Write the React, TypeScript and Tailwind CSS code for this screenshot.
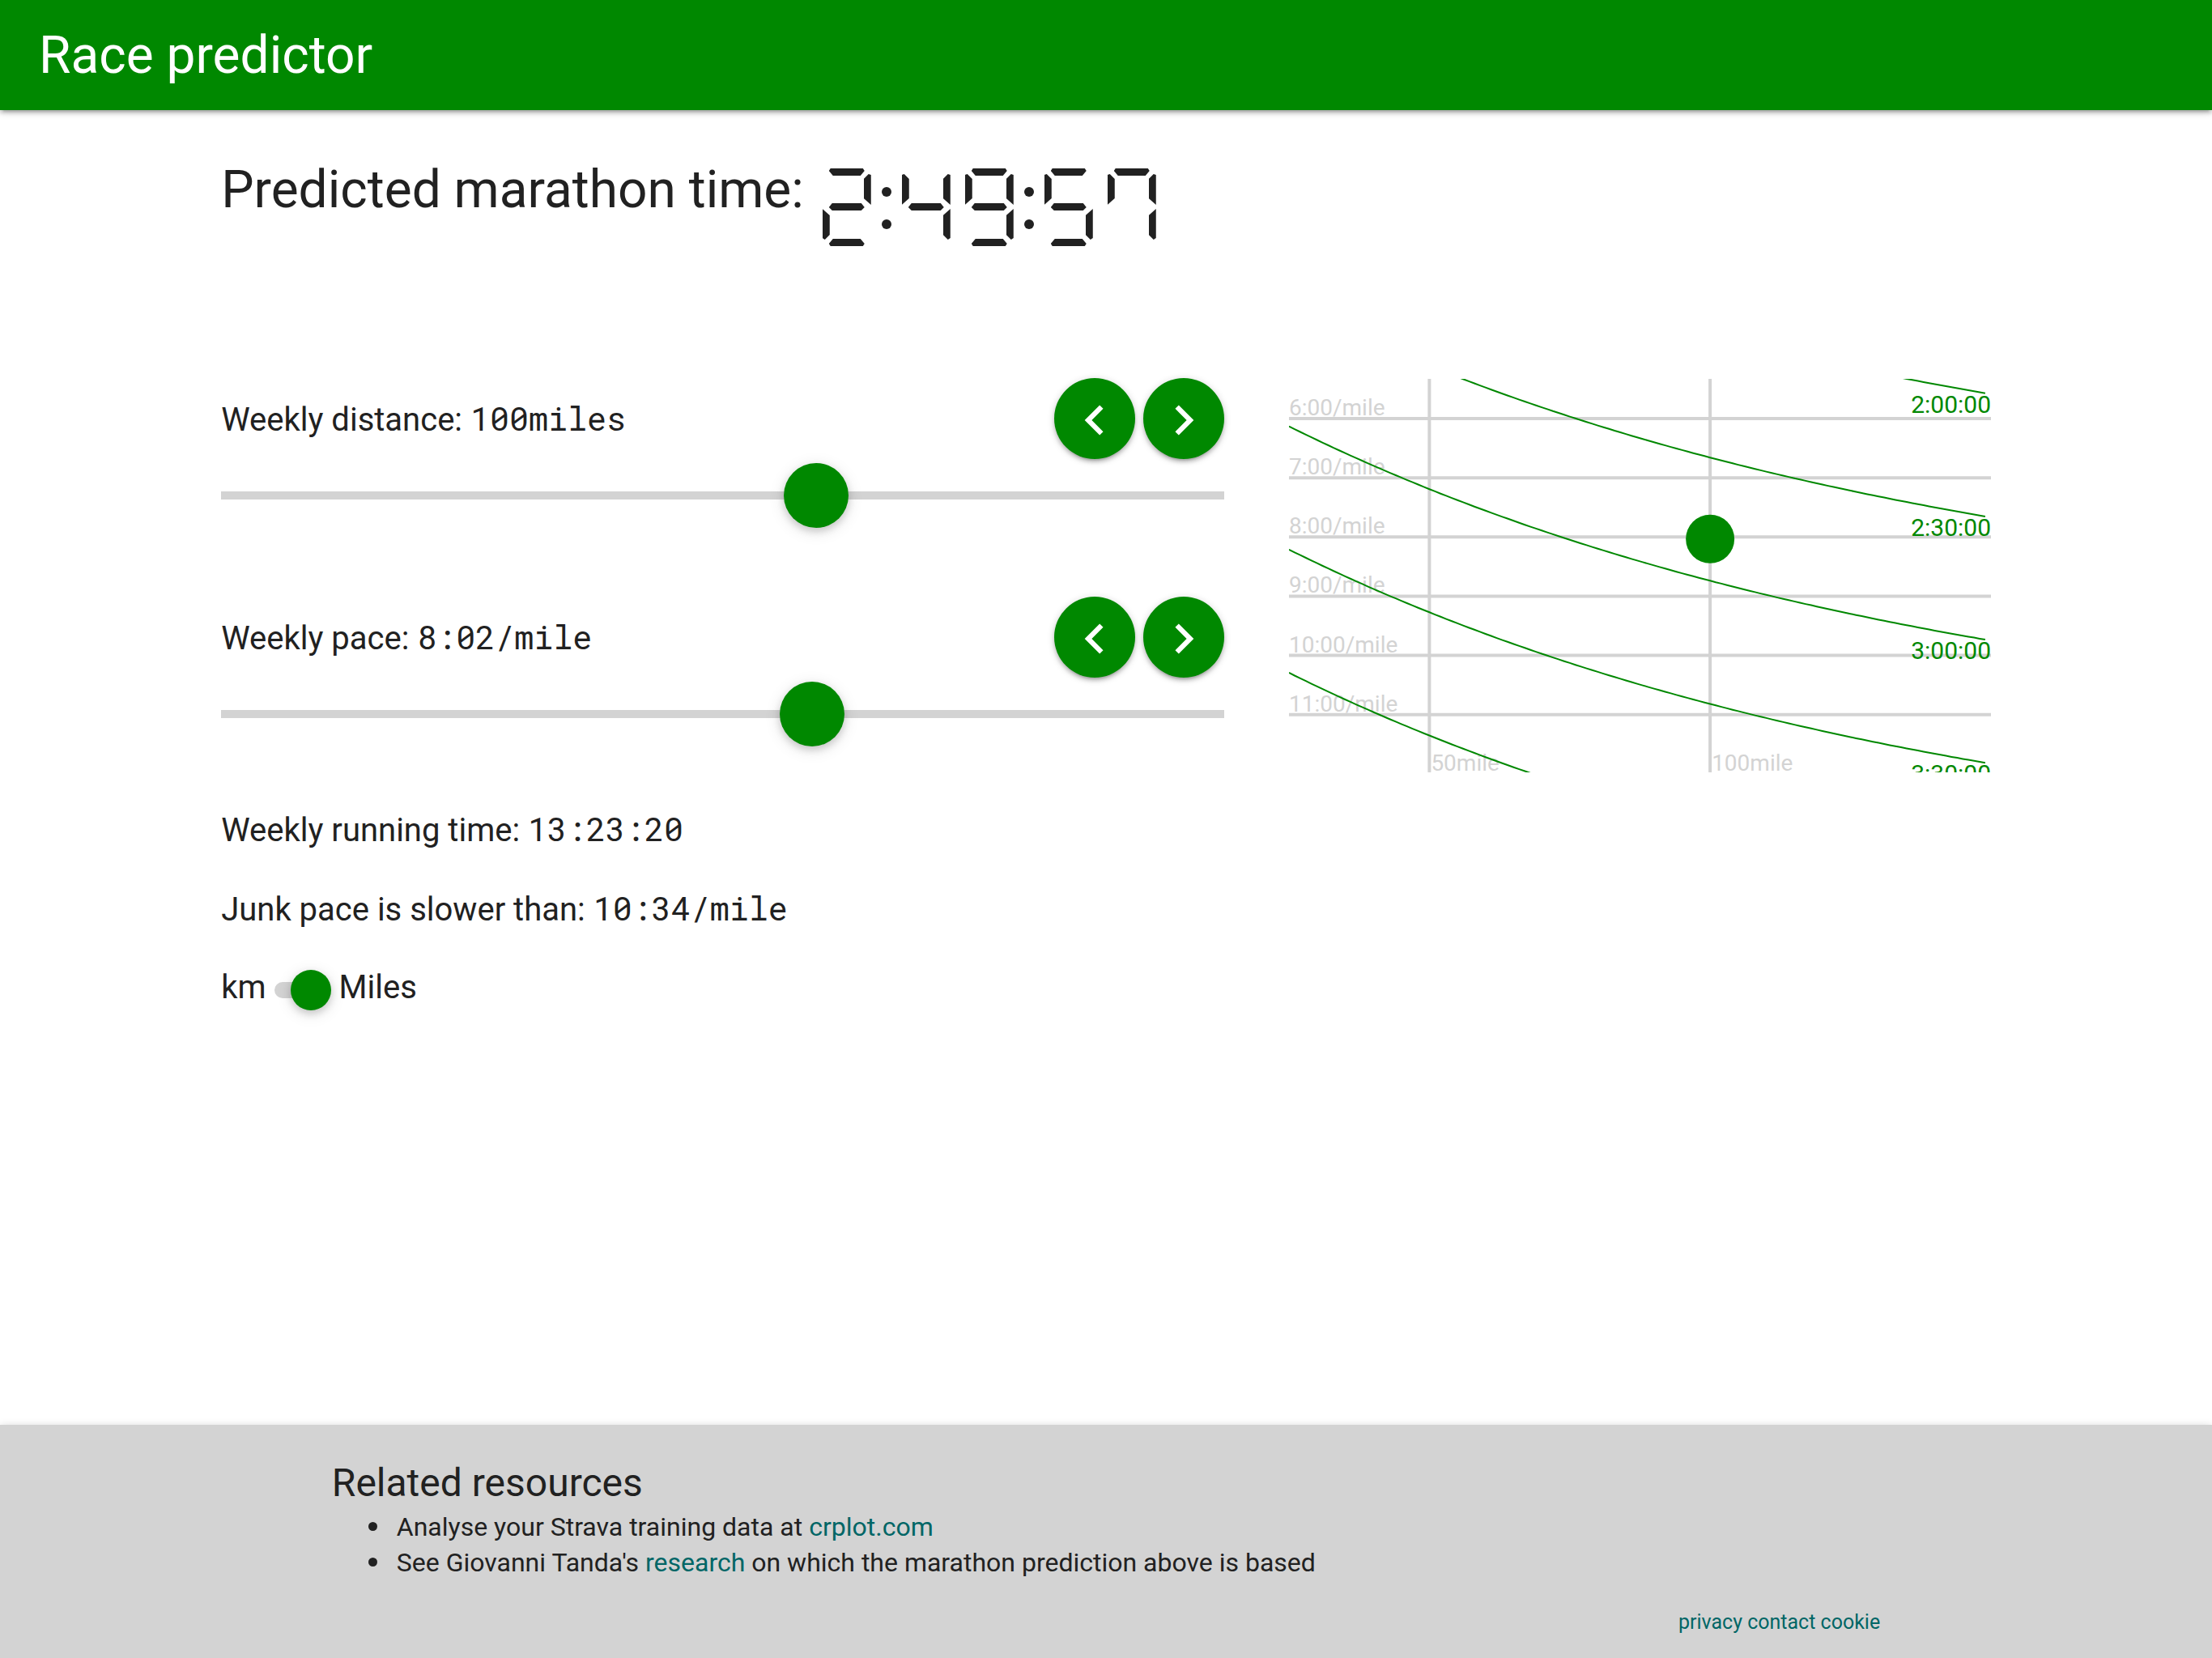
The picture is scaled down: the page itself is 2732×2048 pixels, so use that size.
import { useState } from "react";

const GREEN = "#008800";
const GRID = "#d3d3d3";

/* ---------- Seven-segment clock ---------- */

type Segment = "a" | "b" | "c" | "d" | "e" | "f" | "g";

const SEGMENTS: Record<string, string> = {
  "0": "abcdef",
  "1": "bc",
  "2": "abged",
  "3": "abgcd",
  "4": "fgbc",
  "5": "afgcd",
  "6": "afgedc",
  "7": "fabc",
  "8": "abcdefg",
  "9": "abcdfg",
};

const SEGMENT_CLASS: Record<Segment, string> = {
  a: "left-2 top-0 h-[9px] w-11 [clip-path:polygon(0_3px,2px_0,42px_0,44px_3px,39px_9px,5px_9px)]",
  g: "left-2 top-[43px] h-[9px] w-11 [clip-path:polygon(0_5px,4px_0,40px_0,44px_5px,40px_9px,4px_9px)]",
  d: "left-2 top-[87px] h-[9px] w-11 [clip-path:polygon(5px_0,39px_0,44px_6px,42px_9px,2px_9px,0_6px)]",
  f: "left-0 top-[7px] h-[38px] w-[9px] [clip-path:polygon(0_1px,3px_0,9px_6px,9px_30px,0_38px)]",
  b: "right-0 top-[7px] h-[38px] w-[9px] [clip-path:polygon(9px_1px,6px_0,0_6px,0_30px,9px_38px)]",
  e: "left-0 top-[50px] h-[38px] w-[9px] [clip-path:polygon(0_0,9px_8px,9px_32px,3px_38px,0_36px)]",
  c: "right-0 top-[50px] h-[38px] w-[9px] [clip-path:polygon(9px_0,0_8px,0_32px,6px_38px,9px_36px)]",
};

function Clock({ value }: { value: string }) {
  return (
    <div role="img" aria-label={value} className="flex">
      {value.split("").map((ch, i) =>
        ch === ":" ? (
          <div key={i} className="flex h-24 w-5 flex-col items-center gap-7 pt-[23px]">
            <div className="size-3 rounded-full bg-[#212121]" />
            <div className="size-3 rounded-full bg-[#212121]" />
          </div>
        ) : (
          <div key={i} className="relative mx-[9px] h-24 w-[60px]">
            {(SEGMENTS[ch].split("") as Segment[]).map((s) => (
              <div key={s} className={`absolute bg-[#212121] ${SEGMENT_CLASS[s]}`} />
            ))}
          </div>
        ),
      )}
    </div>
  );
}

/* ---------- Controls ---------- */

function StepButton({ direction, label, onClick }: { direction: "left" | "right"; label: string; onClick: () => void }) {
  return (
    <button
      type="button"
      aria-label={label}
      onClick={onClick}
      className="flex size-[100px] cursor-pointer items-center justify-center rounded-full bg-[#008800] pt-1 shadow-[0_4px_4px_rgba(0,0,0,0.14),0_6px_2px_-4px_rgba(0,0,0,0.12),0_2px_10px_rgba(0,0,0,0.2)]"
    >
      <svg viewBox="0 0 24 24" className="size-[74px] fill-white" aria-hidden="true">
        {direction === "left" ? (
          <path d="M15.41 7.41 14 6l-6 6 6 6 1.41-1.41L10.83 12z" />
        ) : (
          <path d="M10 6 8.59 7.41 13.17 12l-4.58 4.59L10 18l6-6z" />
        )}
      </svg>
    </button>
  );
}

interface ControlProps {
  id: string;
  label: string;
  display: string;
  min: number;
  max: number;
  value: number;
  onChange: (value: number) => void;
}

function Control({ id, label, display, min, max, value, onChange }: ControlProps) {
  const step = (delta: number) => onChange(Math.min(max, Math.max(min, value + delta)));
  return (
    <div>
      <div className="flex items-center justify-between">
        <label htmlFor={id} className="pt-0.5">
          {label} <Mono>{display}</Mono>
        </label>
        <div className="flex gap-2.5">
          <StepButton direction="left" label={`Decrease ${id}`} onClick={() => step(-1)} />
          <StepButton direction="right" label={`Increase ${id}`} onClick={() => step(1)} />
        </div>
      </div>
      <input
        id={id}
        type="range"
        min={min}
        max={max}
        value={value}
        onChange={(e) => onChange(Number(e.target.value))}
        className="mt-[5px] block h-20 w-full cursor-pointer appearance-none bg-transparent outline-none [&::-webkit-slider-runnable-track]:h-2.5 [&::-webkit-slider-runnable-track]:bg-[#d3d3d3] [&::-webkit-slider-thumb]:-mt-[35px] [&::-webkit-slider-thumb]:size-20 [&::-webkit-slider-thumb]:appearance-none [&::-webkit-slider-thumb]:rounded-full [&::-webkit-slider-thumb]:bg-[#008800] [&::-webkit-slider-thumb]:shadow-[0_4px_10px_rgba(0,0,0,0.16),0_4px_20px_rgba(0,0,0,0.12)]"
      />
    </div>
  );
}

function Mono({ children }: { children: React.ReactNode }) {
  return <span className="font-['Roboto_Mono','Liberation_Mono',monospace]">{children}</span>;
}

/* ---------- Chart ---------- */

const KM_PER_MILE = 1.609344;
const MARATHON_KM = 42.195;
const MIN_MILES = 25;

const chartX = (miles: number) => (miles - MIN_MILES) * 6.935;
const chartY = (minutes: number) => 49 + (minutes - 6) * 73.15;

// Tanda's formula solved for training pace, in minutes per mile.
function trainingPace(finish: number, miles: number) {
  const racePace = finish / MARATHON_KM;
  const perKm = (racePace - 17.1 - 140 * Math.exp(-0.0053 * miles * KM_PER_MILE)) / 0.55;
  return (perKm * KM_PER_MILE) / 60;
}

const CONTOURS = [
  { label: "2:00:00", seconds: 7200 },
  { label: "2:30:00", seconds: 9000 },
  { label: "3:00:00", seconds: 10800 },
  { label: "3:30:00", seconds: 12600 },
  { label: "", seconds: 14400 },
];

function Chart({ miles, pace }: { miles: number; pace: number }) {
  return (
    <svg
      viewBox="0 0 867 486"
      className="mt-px block w-full overflow-hidden font-[Roboto,sans-serif]"
      role="img"
      aria-label="Marathon time by weekly distance and pace"
    >
      {[6, 7, 8, 9, 10, 11].map((m) => (
        <g key={m}>
          <line x1={0} x2={867} y1={chartY(m)} y2={chartY(m)} stroke={GRID} strokeWidth={4} />
          <text x={0} y={chartY(m) - 4} fontSize={28} fill={GRID}>
            {`${m}:00/mile`}
          </text>
        </g>
      ))}
      {[50, 100].map((d) => (
        <g key={d}>
          <line x1={chartX(d)} x2={chartX(d)} y1={0} y2={486} stroke={GRID} strokeWidth={4} />
          <text x={chartX(d) + 2} y={484} fontSize={28} fill={GRID}>
            {`${d}mile`}
          </text>
        </g>
      ))}
      {CONTOURS.map(({ label, seconds }, i) => (
        <g key={seconds}>
          <polyline
            fill="none"
            stroke={GREEN}
            strokeWidth={2}
            points={Array.from({ length: 125 }, (_, n) => {
              const d = MIN_MILES + n;
              return `${chartX(d).toFixed(1)},${chartY(trainingPace(seconds, d)).toFixed(1)}`;
            }).join(" ")}
          />
          {label && (
            <text x={867} y={42 + i * 152} fontSize={30} textAnchor="end" fill={GREEN}>
              {label}
            </text>
          )}
        </g>
      ))}
      <circle cx={chartX(miles)} cy={chartY(pace / 60)} r={30} fill={GREEN} />
    </svg>
  );
}

/* ---------- Page ---------- */

function clock(total: number, hours: boolean) {
  const t = Math.round(total);
  const s = String(t % 60).padStart(2, "0");
  const m = Math.floor(t / 60);
  return hours ? `${Math.floor(m / 60)}:${String(m % 60).padStart(2, "0")}:${s}` : `${m}:${s}`;
}

const RESOURCE_ITEM =
  "relative before:absolute before:top-4 before:-left-[35px] before:size-[11px] before:rounded-full before:bg-[#212121]";

export default function App() {
  const [miles, setMiles] = useState(100);
  const [pace, setPace] = useState(482);
  const [useMiles, setUseMiles] = useState(true);

  const raceSeconds =
    MARATHON_KM * (17.266 + 140 * Math.exp(-0.0053 * miles * KM_PER_MILE) + (0.55 * pace) / KM_PER_MILE);

  return (
    <div className="flex min-h-screen flex-col bg-white font-[Roboto,sans-serif] text-[40px] leading-[60px] text-[#212121]">
      <header className="flex h-[136px] items-center bg-[#008800] px-12 pt-0.5 text-white shadow-[0_4px_4px_rgba(0,0,0,0.14),0_6px_2px_-4px_rgba(0,0,0,0.12),0_2px_10px_rgba(0,0,0,0.2)]">
        <h1 className="text-[64px] leading-[72px]">Race predictor</h1>
      </header>

      <main className="px-[10%] pt-12">
        <div className="flex items-start">
          <h2 className="pt-[13px] text-[64px] leading-[76px]">Predicted marathon time:</h2>
          <div className="pt-6 pl-3.5">
            <Clock value={clock(raceSeconds, true)} />
          </div>
        </div>

        <div className="mt-[163px] grid grid-cols-[10fr_7fr] items-start gap-20">
          <div>
            <div className="flex flex-col gap-[85px]">
              <Control
                id="distance"
                label="Weekly distance:"
                display={`${miles}miles`}
                min={25}
                max={150}
                value={miles}
                onChange={setMiles}
              />
              <Control
                id="pace"
                label="Weekly pace:"
                display={`${clock(pace, false)}/mile`}
                min={244}
                max={644}
                value={pace}
                onChange={setPace}
              />
            </div>
            <div className="mt-18 flex flex-col gap-9">
              <p>
                Weekly running time: <Mono>{clock(miles * pace, true)}</Mono>
              </p>
              <p>
                Junk pace is slower than: <Mono>10:34/mile</Mono>
              </p>
              <label className="flex cursor-pointer items-center gap-2.5">
                km
                <input
                  type="checkbox"
                  role="switch"
                  aria-label="Use miles"
                  checked={useMiles}
                  onChange={(e) => setUseMiles(e.target.checked)}
                  className="relative mt-1.5 h-[50px] w-[70px] cursor-pointer appearance-none before:absolute before:top-[15px] before:left-0 before:h-5 before:w-[60px] before:rounded-full before:bg-[#d3d3d3] after:absolute after:top-0 after:left-0 after:size-[50px] after:rounded-full after:bg-[#008800] after:shadow-[0_4px_10px_rgba(0,0,0,0.16),0_4px_20px_rgba(0,0,0,0.12)] checked:after:left-5"
                />
                Miles
              </label>
            </div>
          </div>
          <Chart miles={miles} pace={pace} />
        </div>
      </main>

      <footer className="mt-auto bg-[#d3d3d3] px-[15%] pt-10 pb-6 text-[32px] leading-11 shadow-[0_4px_4px_rgba(0,0,0,0.14),0_6px_2px_-4px_rgba(0,0,0,0.12),0_2px_10px_rgba(0,0,0,0.2)]">
        <h3 className="text-5xl leading-[64px]">Related resources</h3>
        <ul className="pl-20">
          <li className={RESOURCE_ITEM}>
            Analyse your Strava training data at{" "}
            <a href="#crplot" className="text-[#006666]">
              crplot.com
            </a>
          </li>
          <li className={RESOURCE_ITEM}>
            See Giovanni Tanda's{" "}
            <a href="#research" className="text-[#006666]">
              research
            </a>{" "}
            on which the marathon prediction above is based
          </li>
        </ul>
        <nav className="mt-8 text-right text-[25px] leading-10 text-[#006666]">
          <a href="#privacy">privacy</a> <a href="#contact">contact</a> <a href="#cookie">cookie</a>
        </nav>
      </footer>
    </div>
  );
}
